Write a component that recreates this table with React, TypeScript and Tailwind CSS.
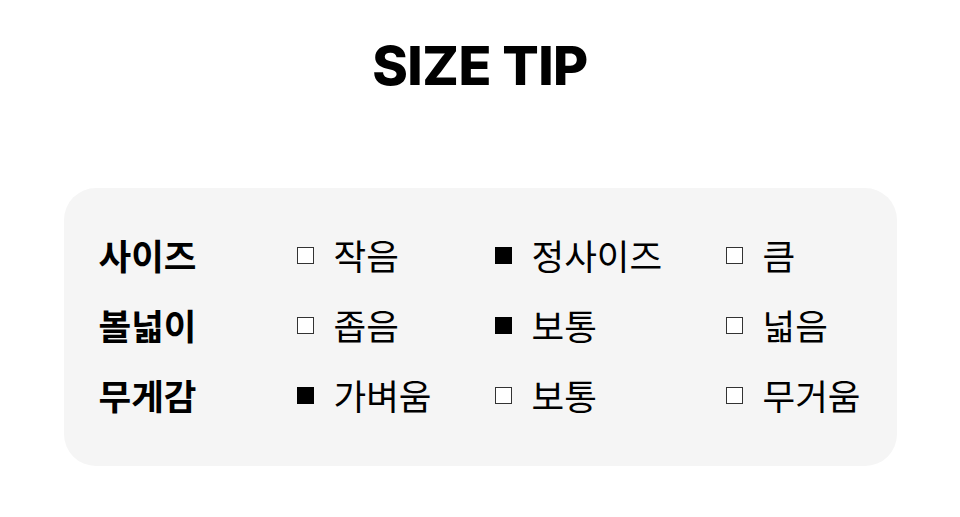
import React from "react";

const rows: { label: string; items: { text: string; on: boolean }[] }[] = [
  { label: "사이즈", items: [{ text: "작음", on: false }, { text: "정사이즈", on: true }, { text: "큼", on: false }] },
  { label: "볼넓이", items: [{ text: "좁음", on: false }, { text: "보통", on: true }, { text: "넓음", on: false }] },
  { label: "무게감", items: [{ text: "가벼움", on: true }, { text: "보통", on: false }, { text: "무거움", on: false }] },
];

function Box({ on }: { on: boolean }) {
  return on ? (
    <span className="inline-block w-[17px] h-[17px] bg-black shrink-0" />
  ) : (
    <span className="inline-block w-[17px] h-[17px] border border-[#333] bg-white shrink-0" />
  );
}

export default function App() {
  return (
    <div
      className="w-[960px] h-[517px] bg-white flex flex-col items-center"
      style={{ fontFamily: '"Noto Sans CJK KR", "Noto Sans", sans-serif' }}
    >
      <h1
        className="mt-[35px] text-[54px] leading-[62px] font-extrabold text-black tracking-[-0.5px]"
        style={{ fontFamily: 'Inter, "Noto Sans CJK KR", sans-serif' }}
      >
        SIZE TIP
      </h1>
      <div className="mt-[91px] w-[833px] h-[278px] rounded-[32px] bg-[#f5f5f5] flex flex-col justify-center pl-[35px] pb-[4px]">
        {rows.map((r) => (
          <div key={r.label} className="flex items-center h-[70px]">
            <div className="w-[198px] text-[35.5px] font-bold text-black leading-none">{r.label}</div>
            {r.items.map((it, i) => (
              <div
                key={i}
                className={`flex items-center gap-[20px] ${i === 0 ? "w-[198px]" : i === 1 ? "w-[231px]" : ""}`}
              >
                <Box on={it.on} />
                <span className="text-[35.5px] text-black leading-none">{it.text}</span>
              </div>
            ))}
          </div>
        ))}
      </div>
    </div>
  );
}
